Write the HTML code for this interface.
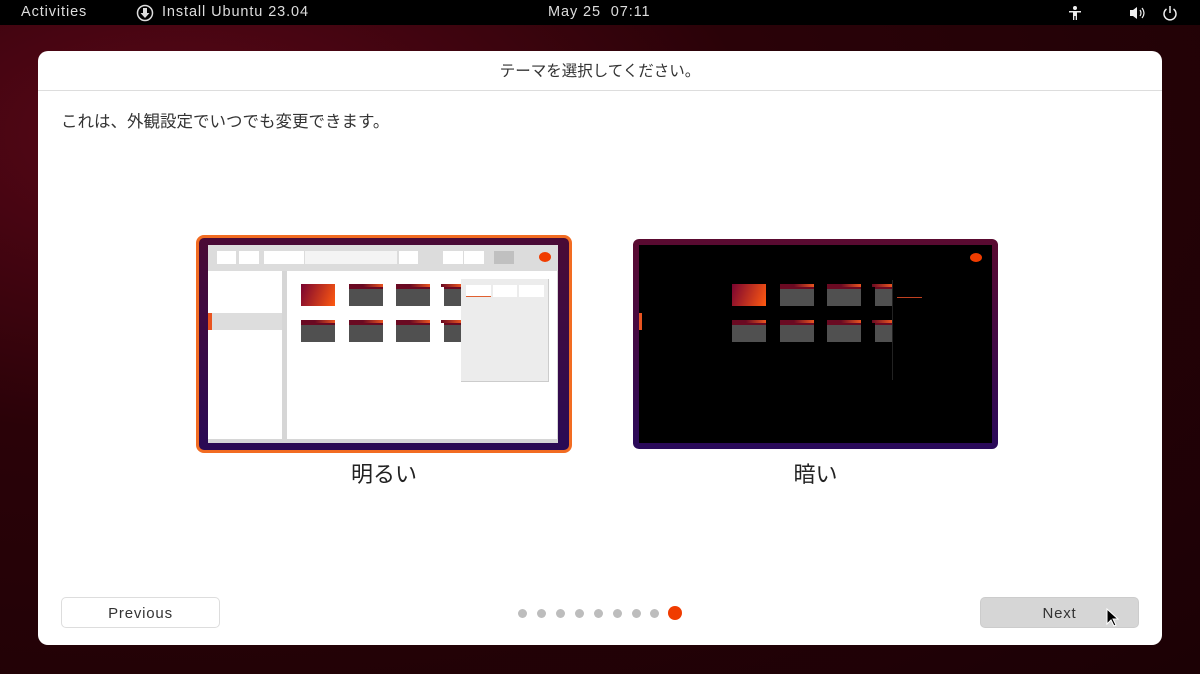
<!DOCTYPE html>
<html><head><meta charset="utf-8"><style>
*{margin:0;padding:0;box-sizing:border-box}
body{width:1200px;height:674px;overflow:hidden;position:relative;font-family:"Liberation Sans","Noto Sans CJK JP",sans-serif;background:radial-gradient(ellipse at 15% 20%,#5a0718 0%,#2a0208 40%,#1c0105 100%)}
.a{position:absolute}
.top{left:0;top:0;width:1200px;height:25px;background:#000;color:#ddd;font-size:14.5px;letter-spacing:0.9px}
.win{left:38px;top:51px;width:1124px;height:594px;background:#fff;border-radius:10px}
.fold{position:absolute;width:34px;height:22px;background:#505050;border-top:5px solid #6a0a22}
.fold:after{content:"";position:absolute;right:0;top:-5px;width:20px;height:3px;background:linear-gradient(90deg,#6a0a22,#e95420)}
.dot{position:absolute;top:609px;width:9px;height:9px;border-radius:50%;background:#bdbdbd}
.btn{position:absolute;top:597px;width:159px;height:31px;border-radius:5px;font-size:15px;letter-spacing:0.8px;color:#333;text-align:center;line-height:31px}
</style></head><body>
<div class="a top">
 <span class="a" style="left:21px;top:4px">Activities</span>
 <svg class="a" style="left:136px;top:4px" width="18" height="18" viewBox="0 0 18 18"><circle cx="9" cy="9" r="7.5" fill="none" stroke="#ddd" stroke-width="1.5"/><path d="M7 4h4v5h2.5L9 14 4.5 9H7z" fill="#ddd"/></svg>
 <span class="a" style="left:162px;top:4px">Install Ubuntu 23.04</span>
 <span class="a" style="left:548px;top:4px">May 25&nbsp; 07:11</span>
 <svg class="a" style="left:1067px;top:5px" width="16" height="16" viewBox="0 0 16 16" fill="#eee"><circle cx="8" cy="3" r="2"/><path d="M2 6h12v1.5H10V15H8.7v-4H7.3v4H6V7.5H2z"/></svg>
 <svg class="a" style="left:1129px;top:5px" width="18" height="16" viewBox="0 0 18 16"><path d="M1 5h3l4-3v12l-4-3H1z" fill="#eee"/><path d="M11 5q2 3 0 6M13 3q4 5 0 10" fill="none" stroke="#eee" stroke-width="1.2"/></svg>
 <svg class="a" style="left:1161px;top:4px" width="18" height="18" viewBox="0 0 18 18" fill="none" stroke="#eee" stroke-width="1.5"><path d="M5.5 5a6 6 0 1 0 7 0"/><path d="M9 2v7"/></svg>
</div>
<div class="a win">
 <div class="a" style="left:0;top:0;width:1124px;height:40px;border-bottom:1px solid #ddd;text-align:center;line-height:42px;font-size:15.5px;color:#333">テーマを選択してください。</div>
 <div class="a" style="left:23px;top:57px;font-size:16.5px;color:#333">これは、外観設定でいつでも変更できます。</div>
</div>
<!-- light card -->
<div class="a" style="left:196px;top:235px;width:376px;height:218px;border:3px solid #f26c22;border-radius:8px;background:linear-gradient(#4a0a35,#2a0a55);"></div>
<div class="a" style="left:208px;top:245px;width:350px;height:198px;background:#d6d6d6"></div>
<div class="a" style="left:208px;top:245px;width:350px;height:26px;background:#dcdcdc"></div>
<div class="a" style="left:217px;top:251px;width:19px;height:13px;background:#fff"></div>
<div class="a" style="left:239px;top:251px;width:20px;height:13px;background:#fff"></div>
<div class="a" style="left:264px;top:251px;width:40px;height:13px;background:#fff"></div>
<div class="a" style="left:305px;top:251px;width:92px;height:13px;background:#f4f4f4"></div>
<div class="a" style="left:399px;top:251px;width:19px;height:13px;background:#fff"></div>
<div class="a" style="left:443px;top:251px;width:20px;height:13px;background:#fff"></div>
<div class="a" style="left:464px;top:251px;width:20px;height:13px;background:#fff"></div>
<div class="a" style="left:494px;top:251px;width:20px;height:13px;background:#c0c0c0"></div>
<div class="a" style="left:539px;top:252px;width:12px;height:10px;border-radius:50%;background:#f03c00"></div>
<div class="a" style="left:208px;top:271px;width:74px;height:168px;background:#fff"></div>
<div class="a" style="left:208px;top:313px;width:74px;height:17px;background:#ddd"></div>
<div class="a" style="left:208px;top:313px;width:4px;height:17px;background:#e95420"></div>
<div class="a" style="left:287px;top:271px;width:270px;height:168px;background:#fff"></div>
<div class="a" style="left:301px;top:284px;width:34px;height:22px;background:linear-gradient(110deg,#7a0430,#ff5a10)"></div>
<div class="fold" style="left:349px;top:284px"></div><div class="fold" style="left:396px;top:284px"></div><div class="fold" style="left:444px;top:284px;width:17px"></div>
<div class="fold" style="left:301px;top:320px"></div><div class="fold" style="left:349px;top:320px"></div><div class="fold" style="left:396px;top:320px"></div><div class="fold" style="left:444px;top:320px;width:17px"></div>
<div class="a" style="left:461px;top:279px;width:88px;height:103px;background:#ececec;border-right:1px solid #ccc;border-bottom:1px solid #ccc"></div>
<div class="a" style="left:466px;top:285px;width:25px;height:12px;background:#fff;border-bottom:1px solid #e06030"></div>
<div class="a" style="left:493px;top:285px;width:24px;height:12px;background:#fff"></div>
<div class="a" style="left:519px;top:285px;width:25px;height:12px;background:#fff"></div>
<!-- dark card -->
<div class="a" style="left:633px;top:239px;width:365px;height:210px;border-radius:6px;background:linear-gradient(#5a0a30,#2a0a5a)"></div>
<div class="a" style="left:639px;top:245px;width:353px;height:198px;background:#000"></div>
<div class="a" style="left:970px;top:253px;width:12px;height:9px;border-radius:50%;background:#f03c00"></div>
<div class="a" style="left:639px;top:313px;width:3px;height:17px;background:#e95420"></div>
<div class="a" style="left:732px;top:284px;width:34px;height:22px;background:linear-gradient(110deg,#7a0430,#ff5a10)"></div>
<div class="fold" style="left:780px;top:284px"></div><div class="fold" style="left:827px;top:284px"></div><div class="fold" style="left:875px;top:284px;width:17px"></div>
<div class="fold" style="left:732px;top:320px"></div><div class="fold" style="left:780px;top:320px"></div><div class="fold" style="left:827px;top:320px"></div><div class="fold" style="left:875px;top:320px;width:17px"></div>
<div class="a" style="left:897px;top:297px;width:25px;height:1px;background:#c04020"></div>
<div class="a" style="left:892px;top:280px;width:1px;height:100px;background:#222"></div>
<!-- labels -->
<div class="a" style="left:196px;top:457px;width:376px;text-align:center;font-size:22px;color:#222">明るい</div>
<div class="a" style="left:633px;top:457px;width:365px;text-align:center;font-size:22px;color:#222">暗い</div>
<!-- dots -->
<div class="dot" style="left:518px"></div><div class="dot" style="left:537px"></div><div class="dot" style="left:556px"></div><div class="dot" style="left:575px"></div><div class="dot" style="left:594px"></div><div class="dot" style="left:613px"></div><div class="dot" style="left:632px"></div><div class="dot" style="left:650px"></div>
<div class="a" style="left:668px;top:606px;width:14px;height:14px;border-radius:50%;background:#f03c00"></div>
<div class="btn" style="left:61px;border:1px solid #ddd;background:#fff">Previous</div>
<div class="btn" style="left:980px;background:#d6d6d6;border:1px solid #ccc">Next</div>
<svg class="a" style="left:1106px;top:608px" width="14" height="20" viewBox="0 0 14 20"><path d="M1 1v15l4-4 3 6 2-1-3-6h5z" fill="#000" stroke="#fff" stroke-width="1"/></svg>
</body></html>
